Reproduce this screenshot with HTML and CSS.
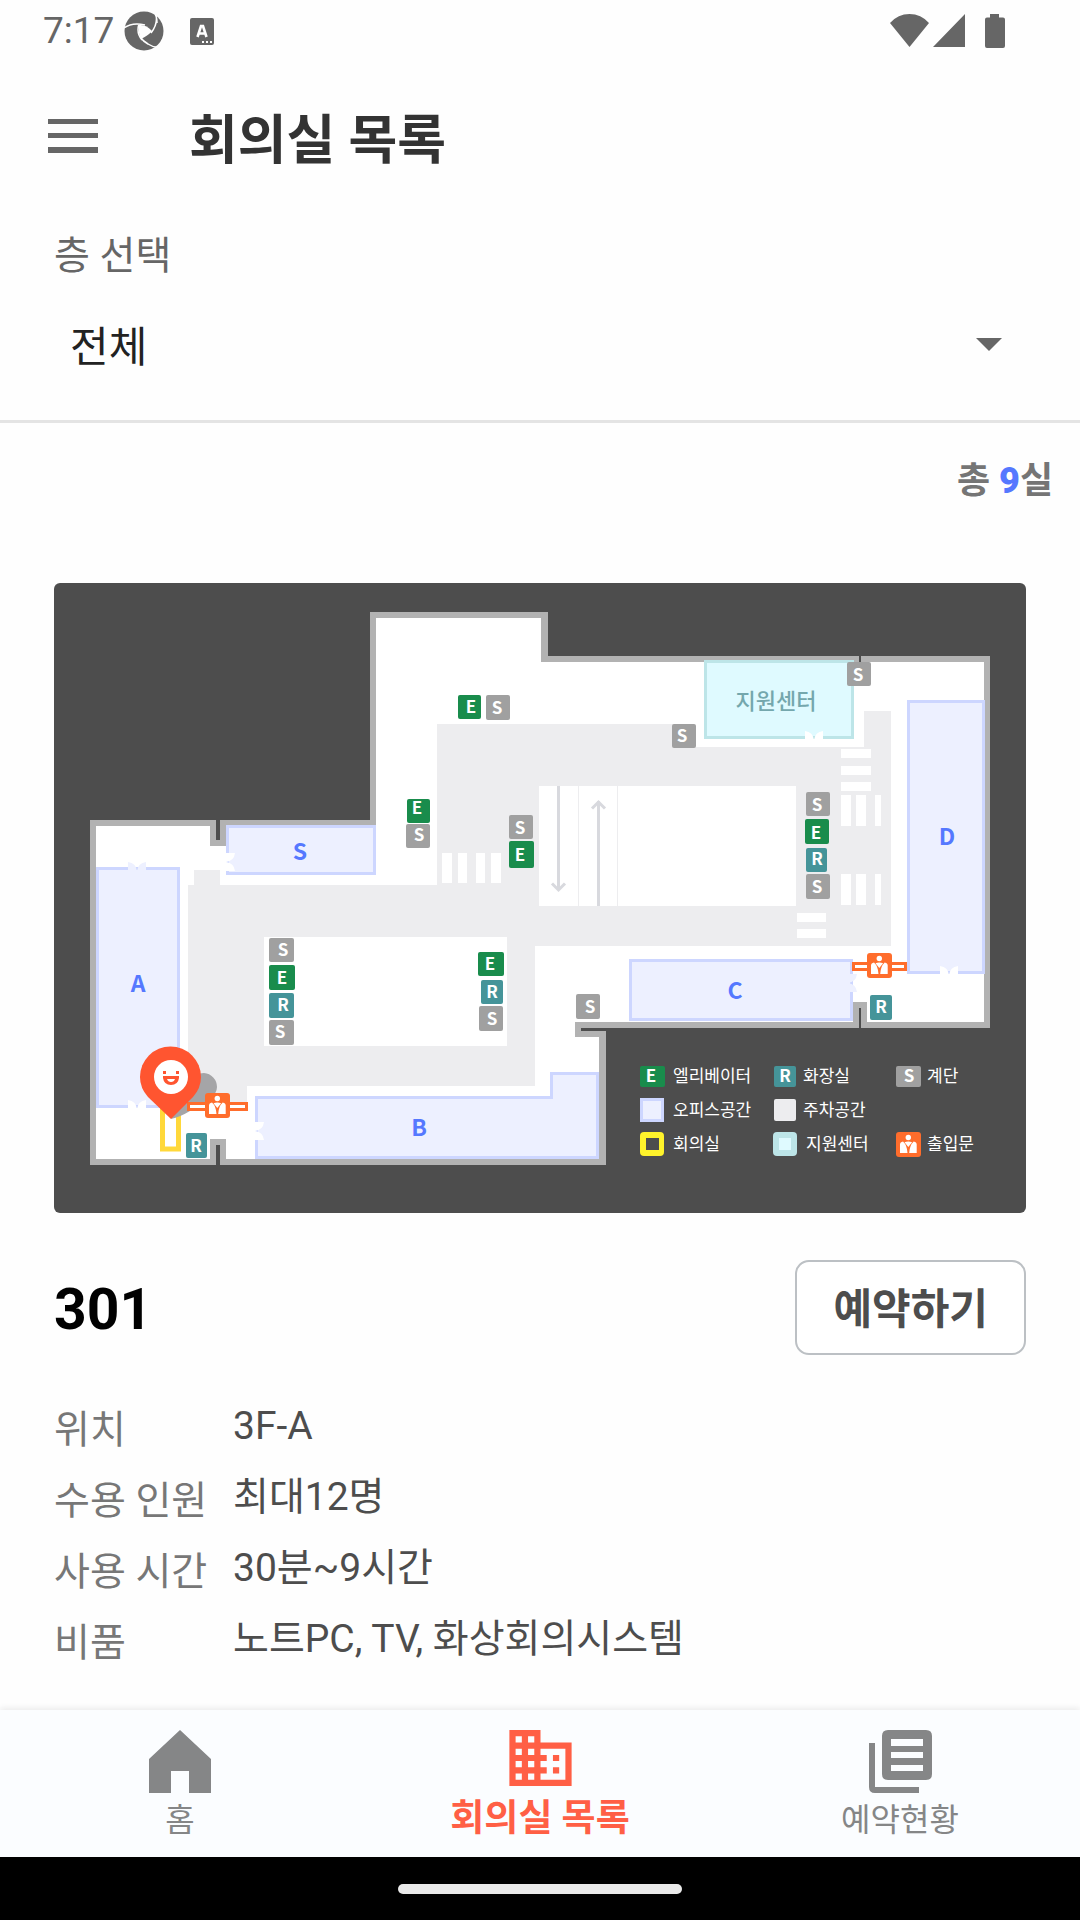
FILE: index.html
```html
<!DOCTYPE html>
<html lang="ko">
<head>
<meta charset="utf-8">
<meta name="viewport" content="width=device-width, initial-scale=1">
<title>회의실 목록</title>
<link rel="stylesheet" href="styles.css">
</head>
<body>
<div class="status-bar">
  <span class="clock">7:17</span>
  <svg class="aperture" viewBox="0 0 40 40" width="40" height="40" aria-hidden="true">
    <circle cx="20" cy="20" r="19.500" fill="#666"/>
    <path d="M15 14Q22 13 28 20Q25 24 17 28Q14 22 15 14Z" fill="#fff"/>
    <path d="M0 17Q8 11 21 14M32 4Q34 13 27 22M36 36Q30 37 24 33Q19 30 17 27M15 13Q12 22 18 29M31 3Q33 6 33 12" fill="none" stroke="#fff" stroke-width="1.500"/>
  </svg>
  <svg class="keyboard" viewBox="0 0 24 27" width="24" height="27" aria-hidden="true">
    <rect width="24" height="27" rx="2" fill="#666"/>
    <path d="M7.500 19L11 8H13L16.500 19M9 15.500H15" fill="none" stroke="#fff" stroke-width="2.600"/>
    <path d="M12 23h2v2h-2zM16 23h2v2h-2zM20 23h2v2h-2z" fill="#fff"/>
  </svg>
  <svg class="signals" viewBox="0 0 114 34" width="114" height="34" aria-hidden="true">
    <path d="M0 9Q8 0 19.500 0T39 9L19.500 33ZM43 33L75 0V33ZM100 0h9v3.500h4q2 0 2 2V32q0 2-2 2H97q-2 0-2-2V5.500q0-2 2-2h3z" fill="#666"/>
  </svg>
</div>

<header class="app-bar">
  <button class="menu-button" type="button" aria-label="메뉴">
    <svg viewBox="0 0 50 34" width="50" height="34"><path d="M0 0h50v5H0zM0 14h50v5H0zM0 28h50v6H0z" fill="#666"/></svg>
  </button>
  <h1>회의실 목록</h1>
</header>

<section class="filter">
  <label for="floor">층 선택</label>
  <div class="select-wrap">
    <select id="floor"><option>전체</option></select>
    <svg class="caret" viewBox="0 0 26 13" width="26" height="13" aria-hidden="true"><path d="M0 0h26L13 13z" fill="#666"/></svg>
  </div>
</section>

<main>
  <p class="count">총 <strong>9</strong>실</p>
  <article class="room">
    <svg class="floor-map" viewBox="54 583 972 630" role="img" aria-label="3층 안내도">
      <defs>
        <path id="leaf-v" d="M0 0Q8 1 9 9H0ZM18 0Q10 1 9 9H18Z"/>
        <path id="leaf-h" d="M9 0Q8 8 0 9V0ZM9 18Q8 10 0 9V18Z"/>
        <g id="gate">
          <rect width="25" height="25" rx="3" fill="#ff6d2c"/>
          <circle cx="12.300" cy="5.500" r="2.700" fill="#fff"/>
          <path d="M8.500 10.300Q12.300 8.500 16.100 10.300L12.300 15ZM4 21V12.500Q4 10 7 9.500Q11 13 11.500 21ZM20.700 21V12.500Q20.700 10 17.700 9.500Q13.700 13 13.200 21Z" fill="#fff"/>
        </g>
      </defs>
      <rect x="54" y="583" width="972" height="630" rx="6" fill="#4d4d4d"/>

      <!-- outer walls and floor -->
      <path fill="#b2b2b2" d="M90 820H216V840H220V820H370V612H548V656H859V662H861V656H990V1028H861V1008H859V1028H581V1031H606V1165H220V1145H216V1165H90Z"/>
      <path fill="#fff" d="M96 826H210V846H226V826H376V618H541V662H984V1022H867V1002H853V1022H575V1037H599V1159H226V1139H210V1159H96Z"/>

      <!-- parking -->
      <path fill="#ededef" d="M194 870H220V885H437V724H690V747H864V711H891V946H535V1086H247V1106H188V885H194Z"/>
      <path fill="#fff" d="M539 786H796V906H539ZM264 937H507V1046H264Z"/>
      <path fill="#fff" d="M442 853h10v30h-10zM458 853h9v30h-9zM476 853h9v30h-9zM491 853h10v30h-10zM841 749h30v9h-30zM841 766h30v9h-30zM841 782h30v9h-30zM841 795h10v31h-10zM856 795h10v31h-10zM875 795h6v31h-6zM841 874h10v31h-10zM856 874h10v31h-10zM875 874h6v31h-6zM797 913h29v9h-29zM797 929h29v9h-29z"/>
      <path fill="none" stroke="#ededef" d="M578.500 786V906M617.500 786V906"/>
      <path fill="none" stroke="#d8d9de" stroke-width="3" d="M558.500 786V890M552 883.500L558.500 890L565 883.500M598.500 906V801M592 808.500L598.500 802L605 808.500"/>

      <!-- offices -->
      <g fill="#edf0ff" stroke="#cdd6ff" stroke-width="3">
        <rect x="227.500" y="826.500" width="147" height="47"/>
        <rect x="97.500" y="868.500" width="81" height="238"/>
        <path d="M256.500 1097.500H551.500V1073.500H597.500V1157.500H256.500Z"/>
        <rect x="630.500" y="960.500" width="221" height="59"/>
        <rect x="908.500" y="701.500" width="75" height="271"/>
      </g>
      <rect x="705.500" y="661.500" width="147" height="76" fill="#dffaff" stroke="#bde5e8" stroke-width="3"/>
      <g fill="#fff">
        <use href="#leaf-h" x="226" y="853"/>
        <use href="#leaf-h" x="255" y="1122"/>
        <use href="#leaf-v" x="128" y="1100"/>
        <use href="#leaf-v" x="940" y="966"/>
        <use href="#leaf-v" x="805" y="731"/>
      </g>
      <g fill="#edf0ff">
        <use href="#leaf-v" x="128" y="862"/>
        <use href="#leaf-h" x="848" y="974"/>
      </g>
      <g class="zone-name">
        <text x="300" y="860">S</text>
        <text x="138" y="992">A</text>
        <text x="947" y="845">D</text>
        <text x="419" y="1136">B</text>
        <text x="735" y="999">C</text>
      </g>
      <text class="center-name" x="776" y="709">지원센터</text>

      <!-- facility badges -->
      <g fill="#198c4c">
        <rect x="458" y="695" width="23" height="24" rx="2"/>
        <rect x="407" y="799" width="23" height="24" rx="2"/>
        <rect x="509" y="841" width="25" height="27" rx="2"/>
        <rect x="805" y="819" width="24" height="25" rx="2"/>
        <rect x="269" y="965" width="26" height="25" rx="2"/>
        <rect x="478" y="952" width="26" height="24" rx="2"/>
        <rect x="640" y="1066" width="25" height="21" rx="2"/>
      </g>
      <g fill="#459499">
        <rect x="806" y="848" width="21" height="24" rx="2"/>
        <rect x="269" y="993" width="25" height="25" rx="2"/>
        <rect x="186" y="1133" width="21" height="25" rx="2"/>
        <rect x="481" y="980" width="22" height="24" rx="2"/>
        <rect x="870" y="995" width="22" height="25" rx="2"/>
        <rect x="774" y="1066" width="22" height="21" rx="2"/>
      </g>
      <g fill="#a0a0a0">
        <rect x="486" y="695" width="24" height="25" rx="2"/>
        <rect x="672" y="724" width="24" height="24" rx="2"/>
        <rect x="406" y="824" width="24" height="24" rx="2"/>
        <rect x="509" y="815" width="24" height="24" rx="2"/>
        <rect x="847" y="662" width="24" height="24" rx="2"/>
        <rect x="806" y="792" width="24" height="24" rx="2"/>
        <rect x="806" y="874" width="24" height="25" rx="2"/>
        <rect x="269" y="938" width="25" height="24" rx="2"/>
        <rect x="269" y="1020" width="25" height="25" rx="2"/>
        <rect x="479" y="1006" width="24" height="25" rx="2"/>
        <rect x="576" y="994" width="24" height="25" rx="2"/>
        <rect x="896" y="1066" width="25" height="21" rx="2"/>
      </g>
      <g class="badge-letter">
        <text x="471" y="713">E</text><text x="497" y="714">S</text>
        <text x="682" y="742">S</text><text x="417" y="814">E</text>
        <text x="419" y="841">S</text><text x="520" y="834">S</text>
        <text x="520" y="861">E</text><text x="858" y="681">S</text>
        <text x="817" y="811">S</text><text x="816" y="839">E</text>
        <text x="817" y="865">R</text><text x="817" y="893">S</text>
        <text x="283" y="956">S</text><text x="282" y="984">E</text>
        <text x="283" y="1011">R</text><text x="280" y="1038">S</text>
        <text x="196" y="1152">R</text><text x="490" y="970">E</text>
        <text x="492" y="998">R</text><text x="492" y="1025">S</text>
        <text x="590" y="1013">S</text><text x="881" y="1013">R</text>
        <text x="651" y="1082">E</text><text x="785" y="1082">R</text>
        <text x="909" y="1082">S</text>
      </g>

      <!-- selected room, pin and gates -->
      <rect x="162.500" y="1106" width="16" height="43" fill="#fff" stroke="#ffd83a" stroke-width="5"/>
      <path fill="#a5a5a7" d="M171 1119L190 1080Q195 1073 204 1073A14 14 0 0 1 217 1087Q217 1093 210 1099L190 1111Q180 1117 171 1119Z"/>
      <g fill="#fff" stroke="#ff6d2c" stroke-width="3">
        <rect x="188.500" y="1103.500" width="58" height="6"/>
        <rect x="853.500" y="963.500" width="52" height="6"/>
      </g>
      <use href="#gate" x="205" y="1093"/>
      <use href="#gate" x="867" y="953"/>
      <path fill="#ff5530" d="M171 1119L148 1097Q140 1088 140 1077A30.500 30.500 0 0 1 201 1077Q201 1088 193 1097Z"/>
      <circle cx="171" cy="1077" r="17" fill="#fff"/>
      <path fill="#ff5530" d="M163 1071h3v3h-3zM176 1071h3v3h-3zM163 1076h16v2Q178 1085 171 1085T163 1078Z"/>
      <path fill="#fff" d="M167 1079h8Q174 1082 171 1082T167 1079Z"/>

      <!-- legend -->
      <rect x="641.500" y="1099.500" width="21" height="21" fill="#edf0ff" stroke="#cdd6ff" stroke-width="3"/>
      <rect x="774" y="1099" width="22" height="22" rx="2" fill="#ededef"/>
      <rect x="640" y="1132" width="24" height="24" rx="4" fill="#fff32b"/>
      <rect x="646" y="1138" width="13" height="12" fill="#4d4d4d"/>
      <rect x="773" y="1132" width="24" height="24" rx="4" fill="#bde5e8"/>
      <rect x="779" y="1138" width="12" height="12" fill="#dffaff"/>
      <use href="#gate" x="896" y="1132"/>
      <g class="legend">
        <text x="673" y="1082">엘리베이터</text>
        <text x="803" y="1082">화장실</text>
        <text x="927" y="1082">계단</text>
        <text x="673" y="1116">오피스공간</text>
        <text x="803" y="1116">주차공간</text>
        <text x="673" y="1150">회의실</text>
        <text x="806" y="1150">지원센터</text>
        <text x="927" y="1150">출입문</text>
      </g>
    </svg>

    <div class="room-head">
      <h2>301</h2>
      <button class="reserve" type="button">예약하기</button>
    </div>
    <dl class="details">
      <dt>위치</dt><dd>3F-A</dd>
      <dt>수용 인원</dt><dd>최대12명</dd>
      <dt>사용 시간</dt><dd>30분~9시간</dd>
      <dt>비품</dt><dd>노트PC, TV, 화상회의시스템</dd>
    </dl>
  </article>
</main>

<nav class="tabs">
  <a href="#home">
    <svg viewBox="0 0 62 63" width="62" height="63" aria-hidden="true"><path d="M31 0L62 29V63H40V41H22V63H0V29Z" fill="currentColor"/></svg>
    <span>홈</span>
  </a>
  <a class="active" href="#rooms" aria-current="page">
    <svg viewBox="2 3 20 18" width="63" height="56" aria-hidden="true"><path d="M12 7V3H2v18h20V7H12zM6 19H4v-2h2v2zm0-4H4v-2h2v2zm0-4H4V9h2v2zm0-4H4V5h2v2zm4 12H8v-2h2v2zm0-4H8v-2h2v2zm0-4H8V9h2v2zm0-4H8V5h2v2zm10 12h-8v-2h2v-2h-2v-2h2v-2h-2V9h8v10zm-2-8h-2v2h2v-2zm0 4h-2v2h2v-2z" fill="currentColor"/></svg>
    <span>회의실 목록</span>
  </a>
  <a href="#reservations">
    <svg viewBox="0 0 63 63" width="63" height="63" aria-hidden="true"><path fill-rule="evenodd" d="M19 0H57Q63 0 63 6V44Q63 50 57 50H19Q13 50 13 44V6Q13 0 19 0ZM22 9V16H54V9ZM22 22V28H54V22ZM22 35V41H54V35ZM0 13H6V57H50V63H6Q0 63 0 57Z" fill="currentColor"/></svg>
    <span>예약현황</span>
  </a>
</nav>
<div class="gesture-bar"><span></span></div>
</body>
</html>
```
FILE: styles.css
```css
* {
  box-sizing: border-box;
}

body {
  margin: 0;
  min-height: 100vh;
  display: flex;
  flex-direction: column;
  background: #fefefe;
  color: #4d4d4d;
  font-family: Roboto, "Noto Sans CJK KR", sans-serif;
}

h1, h2, p, dl, dd {
  margin: 0;
}

svg {
  display: block;
  flex: none;
}

button {
  font: inherit;
  cursor: pointer;
}

.status-bar {
  height: 62px;
  padding: 0 76px 0 43px;
  display: flex;
  align-items: center;
  color: #666;
}

.clock {
  font-size: 37px;
  line-height: 62px;
}

.aperture {
  margin-left: 10px;
}

.keyboard {
  margin-left: 26px;
}

.signals {
  margin-left: auto;
  overflow: visible;
}

.app-bar {
  height: 148px;
  padding: 0 48px;
  display: flex;
  align-items: center;
  gap: 91px;
}

.menu-button {
  padding: 0;
  border: 0;
  background: none;
}

h1 {
  padding-top: 10px;
  font-size: 53px;
  line-height: 72px;
  font-weight: 700;
  color: #333;
}

.filter {
  padding: 22px 54px 30px;
  border-bottom: 3px solid #e4e4e4;
}

.filter label {
  display: block;
  font-size: 39px;
  line-height: 48px;
  color: #666;
}

.select-wrap {
  margin-top: 26px;
  display: grid;
}

.select-wrap > * {
  grid-area: 1 / 1;
}

.filter select {
  width: 100%;
  height: 84px;
  padding: 0 16px;
  appearance: none;
  border: 0;
  background: none;
  color: #222;
  font: 400 42px/60px Roboto, "Noto Sans CJK KR", sans-serif;
}

.caret {
  justify-self: end;
  margin: 32px 24px 0 0;
  pointer-events: none;
}

main {
  flex: 1;
}

.count {
  padding: 28px 27px 0;
  text-align: right;
  font-size: 36px;
  line-height: 60px;
  font-weight: 700;
  color: #757575;
}

.count strong {
  color: #5578ff;
}

.room {
  padding: 72px 54px 0;
}

.floor-map {
  width: 100%;
  height: auto;
  font-family: "Noto Sans CJK KR", sans-serif;
}

.zone-name {
  font-size: 23px;
  font-weight: 700;
  text-anchor: middle;
  fill: #5578ff;
}

.center-name {
  font-size: 22px;
  font-weight: 500;
  text-anchor: middle;
  fill: #74a7ad;
}

.badge-letter {
  font-size: 17px;
  font-weight: 700;
  text-anchor: middle;
  fill: #fff;
}

.legend {
  font-size: 17px;
  fill: #fff;
}

.room-head {
  margin-top: 47px;
  display: flex;
  align-items: center;
  justify-content: space-between;
}

h2 {
  padding-top: 5px;
  font-size: 57px;
  line-height: 72px;
  font-weight: 700;
  color: #000;
}

.reserve {
  height: 95px;
  padding: 5px 36px 0;
  border: 2px solid #bcc0c4;
  border-radius: 14px;
  background: #fff;
  color: #4d4d4d;
  font-size: 42px;
  line-height: 60px;
  font-weight: 700;
}

.details {
  margin-top: 36px;
  display: grid;
  grid-template-columns: 179px 1fr;
  grid-auto-rows: 71px;
  font-size: 39px;
  line-height: 71px;
}

.details dt {
  padding-top: 4px;
  color: #777;
}

.tabs {
  height: 147px;
  display: grid;
  grid-template-columns: repeat(3, 1fr);
  background: #fbfdff;
  box-shadow: 0 -2px 6px rgba(0, 0, 0, 0.08);
}

.tabs a {
  padding-top: 20px;
  display: flex;
  flex-direction: column;
  align-items: center;
  color: #858687;
  text-decoration: none;
  font-size: 32px;
  line-height: 54px;
}

.tabs a.active {
  color: #ff5f45;
  font-size: 37px;
  font-weight: 700;
  line-height: 66px;
}

.gesture-bar {
  height: 63px;
  display: flex;
  align-items: center;
  justify-content: center;
  background: #000;
}

.gesture-bar span {
  width: 284px;
  height: 10px;
  border-radius: 5px;
  background: #eaeaea;
}
```
